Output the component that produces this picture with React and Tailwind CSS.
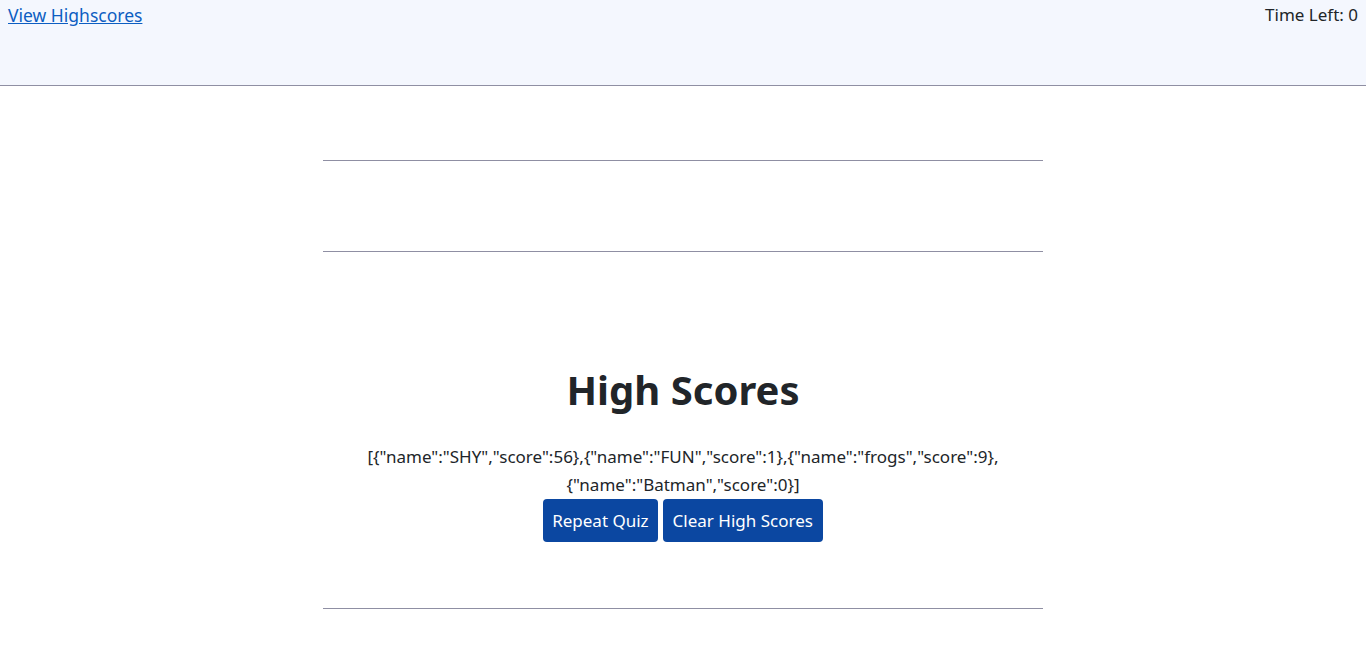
export default function App() {
  const scores = '[{"name":"SHY","score":56},{"name":"FUN","score":1},{"name":"frogs","score":9},{"name":"Batman","score":0}]';
  return (
    <div className="min-h-[657px] bg-white text-[#212529]" style={{ fontFamily: '"Noto Sans", "Open Sans", sans-serif' }}>
      <header className="h-[86px] bg-[#f4f7fe] border-b border-[#8f8fa3] flex justify-between items-start px-2 pt-[2px]">
        <a href="#" className="text-[17.5px] text-[#0d5ec2] underline leading-[26px]">View Highscores</a>
        <span className="text-[17px] leading-[26px]">Time Left: 0</span>
      </header>
      <main className="w-[720px] mx-auto">
        <hr className="mt-[74px] border-t border-[#8f8fa3]" />
        <div className="h-[90px]"></div>
        <hr className="border-t border-[#8f8fa3]" />
        <section className="text-center pt-[110px] pb-[66px]">
          <h1 className="text-[40px] font-bold leading-[56px]">High Scores</h1>
          <p className="mt-[25px] text-[17px] leading-[28px] break-words px-[30px]">{scores}</p>
          <div className="flex justify-center gap-[5px]">
            <button className="bg-[#0b47a1] text-white text-[17px] px-[9px] h-[43px] rounded-[4px]">Repeat Quiz</button>
            <button className="bg-[#0b47a1] text-white text-[17px] px-[10px] h-[43px] rounded-[4px]">Clear High Scores</button>
          </div>
        </section>
        <hr className="border-t border-[#8f8fa3]" />
      </main>
    </div>
  );
}
